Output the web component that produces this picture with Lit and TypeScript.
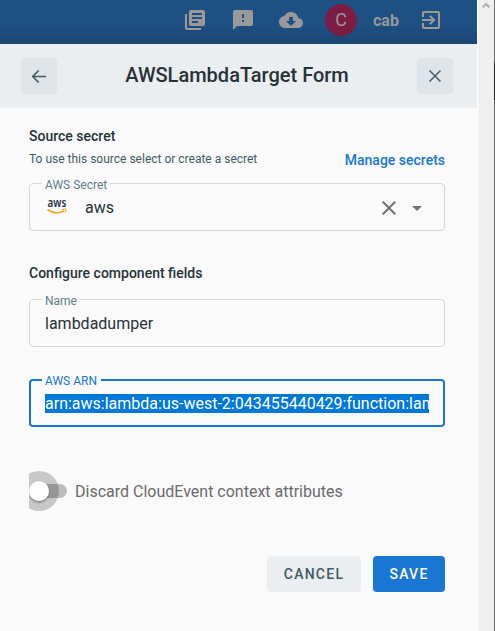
import { LitElement, html, css, svg } from "lit";
import { customElement, property } from "lit/decorators.js";

const icon = (d: string, size = 24) =>
  html`<svg class="icon" width=${size} height=${size} viewBox="0 0 24 24">${svg`<path d=${d} fill="currentColor"/>`}</svg>`;

const paths = {
  docs: "M4 6H2v14c0 1.1.9 2 2 2h14v-2H4V6zm16-4H8c-1.1 0-2 .9-2 2v12c0 1.1.9 2 2 2h12c1.1 0 2-.9 2-2V4c0-1.1-.9-2-2-2zm-1 9H9V9h10v2zm-4 4H9v-2h6v2zm4-8H9V5h10v2z",
  feedback: "M20 2H4c-1.1 0-1.99.9-1.99 2L2 22l4-4h14c1.1 0 2-.9 2-2V4c0-1.1-.9-2-2-2zm-7 12h-2v-2h2v2zm0-4h-2V6h2v4z",
  cloud: "M19.35 10.04C18.67 6.59 15.64 4 12 4 9.11 4 6.6 5.64 5.35 8.04 2.34 8.36 0 10.91 0 14c0 3.31 2.69 6 6 6h13c2.76 0 5-2.24 5-5 0-2.64-2.05-4.78-4.65-4.96zM17 13l-5 5-5-5h3V9h4v4h3z",
  exit: "M10.09 15.59L11.5 17l5-5-5-5-1.41 1.41L12.67 11H3v2h9.67l-2.58 2.59zM19 3H5c-1.11 0-2 .9-2 2v4h2V5h14v14H5v-4H3v4c0 1.1.89 2 2 2h14c1.1 0 2-.9 2-2V5c0-1.1-.9-2-2-2z",
  clear: "M19 6.41L17.59 5 12 10.59 6.41 5 5 6.41 10.59 12 5 17.59 6.41 19 12 13.41 17.59 19 19 17.59 13.41 12z",
  caret: "M7 10l5 5 5-5z",
};

@customElement("outlined-field")
class OutlinedField extends LitElement {
  @property() label = "";
  @property({ type: Boolean, reflect: true }) focused = false;

  static styles = css`
    :host { display: block; }
    .box {
      box-sizing: border-box;
      height: 56px;
      margin: 0;
      min-width: 0;
      padding: 0 15px;
      border: 1px solid #cfd8dc;
      border-radius: 4px;
      color: #263238;
    }
    .label {
      height: 12px;
      margin-left: -3px;
      padding: 4px 3px 0;
      font-size: 12px;
      line-height: 12px;
      color: #607d8b;
    }
    .content { display: flex; align-items: center; height: 33px; font-size: 16px; }
    :host([focused]) .box { height: 55px; border: 2px solid #1976d2; padding: 0 14px; }
    :host([focused]) .label { height: 14px; line-height: 14px; color: #1976d2; padding: 2px 4px 0 3px; }
    :host([focused]) .content { height: 31px; }
  `;

  render() {
    return html`<fieldset class="box">
      <legend class="label">${this.label}</legend>
      <div class="content"><slot></slot></div>
    </fieldset>`;
  }
}

@customElement("app-root")
class AppRoot extends LitElement {
  static styles = css`
    :host {
      display: flex;
      width: 495px;
      height: 631px;
      overflow: hidden;
      font-family: Roboto, "Liberation Sans", sans-serif;
      color: #263238;
    }
    .icon { display: block; flex: none; }
    .main { width: 477px; background: #fafafa; }
    .topbar {
      box-sizing: border-box;
      display: flex;
      align-items: center;
      height: 44px;
      padding: 0 34px 4px 183px;
      background: linear-gradient(#1e5083 0, #1e5083 24px, #1a4673 44px);
      color: #999;
    }
    .topbar .icon + .icon { margin-left: 24px; }
    .avatar {
      width: 32px;
      height: 32px;
      margin: 0 16px 0 22px;
      border-radius: 50%;
      background: #7d1c43;
      text-align: center;
      font-size: 18px;
      line-height: 32px;
    }
    .user { flex: 1; font-size: 16px; font-weight: 700; }
    .header {
      box-sizing: border-box;
      display: flex;
      align-items: center;
      justify-content: space-between;
      height: 64px;
      padding: 0 24px 0 21px;
      background: #eaeef1;
    }
    .square {
      display: flex;
      align-items: center;
      justify-content: center;
      width: 36px;
      height: 36px;
      border-radius: 4px;
      background: #dfe4e8;
      color: #455a64;
    }
    .title { padding-bottom: 2px; font-size: 20px; font-weight: 500; line-height: 24px; }
    .form { padding: 18px 32px 0 29px; }
    .heading { font-size: 14px; font-weight: 500; line-height: 20px; }
    .row { display: flex; align-items: center; justify-content: space-between; height: 27px; padding-bottom: 2px; }
    .hint { padding-bottom: 2px; font-size: 12px; color: #455a64; }
    .link { font-size: 14px; font-weight: 500; color: #1976d2; }
    .aws { display: block; margin-left: 2px; }
    .aws-text { font: 600 12px "Noto Sans", sans-serif; }
    .secret { flex: 1; margin-left: 18px; }
    .tools { display: flex; align-items: center; gap: 4px; color: #707070; }
    .second { margin-top: 32px; }
    .name { margin-top: 8px; }
    .arn { margin-top: 25px; }
    .selected {
      flex: 1;
      height: 19px;
      line-height: 19px;
      overflow: hidden;
      white-space: nowrap;
      background: #0078d7;
      color: #fff;
    }
    .toggle-row {
      display: flex;
      align-items: center;
      height: 40px;
      margin-top: 44px;
      font-size: 16px;
      color: #6b6b6b;
      overflow: hidden;
    }
    .toggle { display: block; margin-right: 8px; }
    .actions { display: flex; justify-content: flex-end; gap: 12px; margin-top: 45px; }
    .button {
      box-sizing: border-box;
      height: 36px;
      padding: 0 16px;
      border-radius: 4px;
      font-size: 14px;
      font-weight: 500;
      line-height: 36px;
      letter-spacing: 1.25px;
      text-align: center;
      background: #eaeef1;
      color: #455a64;
    }
    .cancel { width: 94px; }
    .save { width: 72px; background: #1976d2; color: #fff; }
    .scrollbar {
      box-sizing: border-box;
      width: 17px;
      padding-top: 2px;
      border-left: 1px solid #fff;
      background: #efefef;
      color: #b0b0b0;
    }
    .chevron { display: block; margin: 0 auto; }
    .edge { width: 1px; background: linear-gradient(#666 62px, #222 62px, #222 100px, #666 100px); }
  `;

  render() {
    return html`
      <div class="main">
        <div class="topbar">
          ${icon(paths.docs)}${icon(paths.feedback)}${icon(paths.cloud)}
          <div class="avatar">C</div>
          <div class="user">cab</div>
          ${icon(paths.exit)}
        </div>
        <div class="header">
          <div class="square">
            <svg class="icon" width="18" height="18" fill="none" stroke="currentColor" stroke-width="1.6">
              <path d="M8.6 3.6L2.7 9.5l5.9 5.9M2.8 9.5h13.2" />
            </svg>
          </div>
          <div class="title">AWSLambdaTarget Form</div>
          <div class="square">
            <svg class="icon" width="18" height="18" fill="none" stroke="currentColor" stroke-width="1.5">
              <path d="M3.5 3.5l11 11M14.5 3.5l-11 11" />
            </svg>
          </div>
        </div>
        <div class="form">
          <div class="heading">Source secret</div>
          <div class="row">
            <span class="hint">To use this source select or create a secret</span>
            <span class="link">Manage secrets</span>
          </div>
          <outlined-field label="AWS Secret">
            <svg class="aws" width="20" height="28" viewBox="0 -4 20 28">
              <text class="aws-text" x="0.5" y="9.4" textLength="18.8" lengthAdjust="spacingAndGlyphs" fill="#252f3e">aws</text>
              <path d="M0.4 11.6C5.5 15.2 12 15.6 17.4 12.9" fill="none" stroke="#f90" stroke-width="1.4" />
              <path d="M15 11.7c1.5-.8 3.5-.9 4-.4.4.6-.1 2.4-1.2 3.5" fill="none" stroke="#f90" />
            </svg>
            <span class="secret">aws</span>
            <span class="tools">${icon(paths.clear)}${icon(paths.caret)}</span>
          </outlined-field>
          <div class="heading second">Configure component fields</div>
          <outlined-field class="name" label="Name">lambdadumper</outlined-field>
          <outlined-field class="arn" label="AWS ARN" focused>
            <span class="selected">arn:aws:lambda:us-west-2:043455440429:function:lambdadumper</span>
          </outlined-field>
          <div class="toggle-row">
            <svg class="toggle" width="38" height="40" viewBox="0 0 38 40">
              <defs>
                <filter id="shadow" x="-30%" y="-30%" width="160%" height="160%">
                  <feDropShadow dx="0" dy="1.5" stdDeviation="1.3" flood-opacity="0.4" />
                </filter>
              </defs>
              <rect x="4" y="13" width="34" height="14" rx="7" fill="#bdbdbd" />
              <circle cx="10" cy="20" r="20" fill="#000" fill-opacity="0.2" />
              <circle cx="10" cy="20" r="10" fill="#fff" filter="url(#shadow)" />
            </svg>
            <span>Discard CloudEvent context attributes</span>
          </div>
          <div class="actions">
            <div class="button cancel">CANCEL</div>
            <div class="button save">SAVE</div>
          </div>
        </div>
      </div>
      <div class="scrollbar">
        <svg class="chevron" width="8" height="7" fill="none" stroke="currentColor" stroke-width="2">
          <path d="M0.7 5.3L4 2l3.3 3.3" />
        </svg>
      </div>
      <div class="edge"></div>
    `;
  }
}
